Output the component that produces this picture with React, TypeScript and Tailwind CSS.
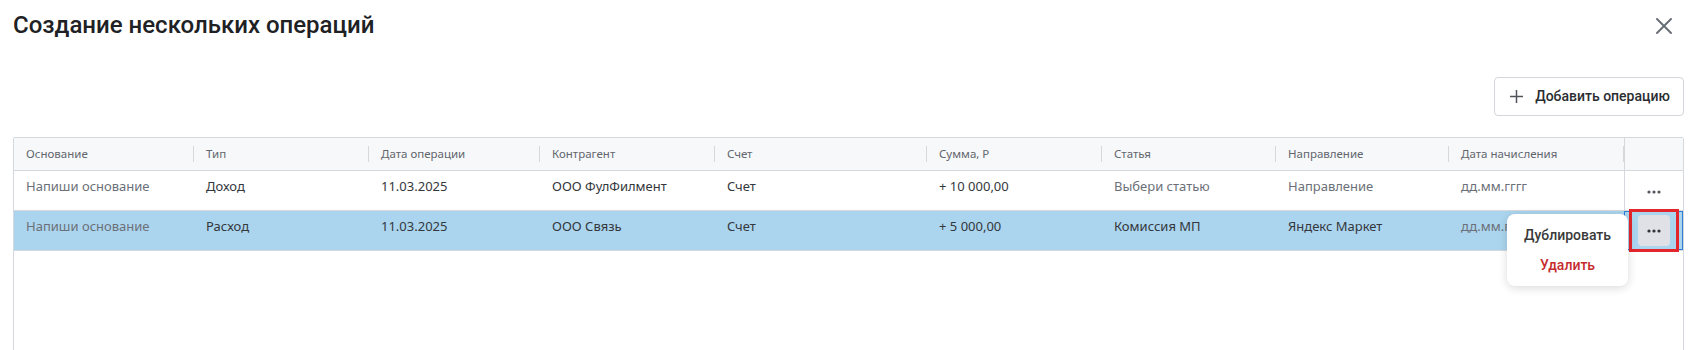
import { ReactNode } from 'react'

type Cell = { text: string; placeholder?: boolean }

const columns = [
  'Основание',
  'Тип',
  'Дата операции',
  'Контрагент',
  'Счет',
  'Сумма, Р',
  'Статья',
  'Направление',
  'Дата начисления',
]

const rows: Cell[][] = [
  [
    { text: 'Напиши основание', placeholder: true },
    { text: 'Доход' },
    { text: '11.03.2025' },
    { text: 'ООО ФулФилмент' },
    { text: 'Счет' },
    { text: '+ 10 000,00' },
    { text: 'Выбери статью', placeholder: true },
    { text: 'Направление', placeholder: true },
    { text: 'дд.мм.гггг', placeholder: true },
  ],
  [
    { text: 'Напиши основание', placeholder: true },
    { text: 'Расход' },
    { text: '11.03.2025' },
    { text: 'ООО Связь' },
    { text: 'Счет' },
    { text: '+ 5 000,00' },
    { text: 'Комиссия МП' },
    { text: 'Яндекс Маркет' },
    { text: 'дд.мм.гггг', placeholder: true },
  ],
]

const grid = 'grid grid-cols-[180px_175px_171px_175px_212px_175px_174px_173px_175px_59px]'

function Dots({ className }: { className?: string }) {
  return (
    <svg width="14" height="4" viewBox="0 0 14 4" className={className}>
      <circle cx="2" cy="2" r="1.6" fill="currentColor" />
      <circle cx="7" cy="2" r="1.6" fill="currentColor" />
      <circle cx="12" cy="2" r="1.6" fill="currentColor" />
    </svg>
  )
}

function RowMenu() {
  return (
    <div className="absolute left-[-118px] top-[3px] z-20 w-[121px] rounded-lg bg-white py-[6px] shadow-[0_2px_10px_rgba(0,0,0,0.15)] font-['Roboto',sans-serif] text-[14px] font-medium">
      <div className="flex h-[30px] items-center justify-center text-[#3a3a3a]">Дублировать</div>
      <div className="flex h-[30px] items-center justify-center text-[#c62b2f]">Удалить</div>
    </div>
  )
}

function ActionCell({ active, children }: { active?: boolean; children?: ReactNode }) {
  return (
    <div
      className={
        active
          ? 'relative flex items-center justify-center border-l border-[#d5d8dd] outline outline-1 -outline-offset-1 outline-[#2f7fd8]'
          : 'relative flex items-center justify-center border-l border-[#d5d8dd]'
      }
    >
      {children}
    </div>
  )
}

export default function App() {
  return (
    <div className="h-[350px] overflow-hidden bg-white px-[13px] font-['Noto_Sans',sans-serif]">
      {/* шапка */}
      <div className="flex items-center justify-between pt-[9px]">
        <h1 className="h-8 font-['Roboto',sans-serif] text-[24px] font-medium leading-8 text-[#202124]">
          Создание нескольких операций
        </h1>
        <button className="mr-[12px] mt-[1px] text-[#686d75]">
          <svg width="16" height="16" viewBox="0 0 16 16">
            <path d="M1 1L15 15M15 1L1 15" stroke="currentColor" strokeWidth="1.9" strokeLinecap="round" />
          </svg>
        </button>
      </div>

      <div className="mt-[36px] flex justify-end">
        <button className="flex h-[39px] w-[190px] items-center justify-center gap-[12px] rounded-[4px] border border-[#d3d6db] bg-white pl-[2px] font-['Roboto',sans-serif] text-[14px] font-medium text-[#2a2d31]">
          <svg width="13" height="13" viewBox="0 0 13 13" className="text-[#50555c]">
            <path d="M6.5 0V13M0 6.5H13" stroke="currentColor" strokeWidth="1.5" />
          </svg>
          Добавить операцию
        </button>
      </div>

      {/* таблица */}
      <div className="mt-[21px] h-[300px] rounded-t-[2px] border border-[#d5d8dd]">
        <div className={`${grid} h-[33px] border-b border-[#d5d8dd] bg-[#f7f8fa] text-[11.5px] text-[#62666d]`}>
          {columns.map((c) => (
            <div key={c} className="flex items-center justify-between pl-3">
              <span>{c}</span>
              <span className="h-4 w-px bg-[#d5d8dd]" />
            </div>
          ))}
          <div className="border-l border-[#d5d8dd]" />
        </div>

        {rows.map((row, i) => (
          <div
            key={i}
            className={`${grid} h-10 border-b border-[#d5d8dd] text-[13px] ${i === 1 ? 'bg-[#abd5ee]' : 'bg-white'}`}
          >
            {row.map((cell, j) => (
              <div
                key={j}
                className={`flex items-center overflow-hidden whitespace-nowrap pb-2 pl-3 ${cell.placeholder ? 'text-[#6b7078]' : 'text-[#34373c]'}`}
              >
                {cell.text}
              </div>
            ))}
            {i === 0 ? (
              <ActionCell>
                <Dots className="mt-[3px] text-[#55595f]" />
              </ActionCell>
            ) : (
              <ActionCell active>
                <div className="flex h-[31px] w-[32px] items-center justify-center rounded-[4px] bg-[#dfe1e6]">
                  <Dots className="text-[#2f3237]" />
                </div>
                <div className="pointer-events-none absolute left-[4px] top-[-2px] z-10 h-[43px] w-[50px] border-[3px] border-[#e3262b]" />
                <RowMenu />
              </ActionCell>
            )}
          </div>
        ))}
      </div>
    </div>
  )
}
